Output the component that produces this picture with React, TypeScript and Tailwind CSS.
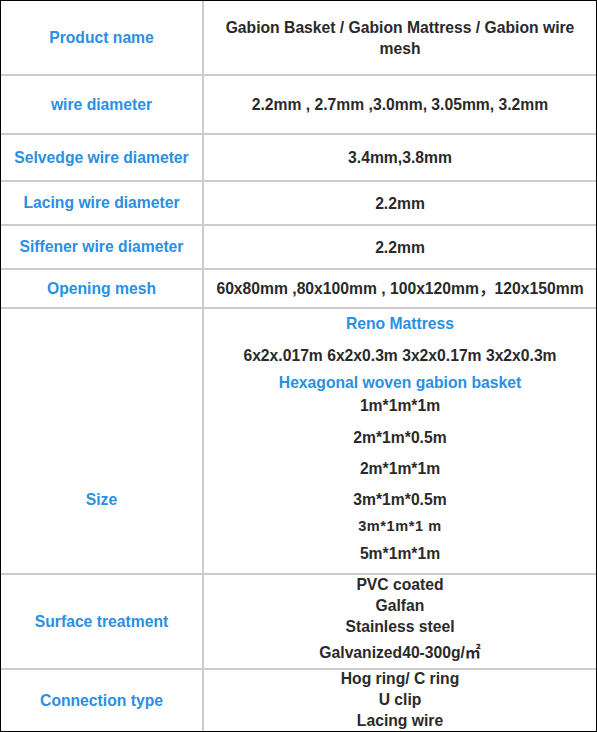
import React from "react";

type Line = { text: string; cls: string; blue?: boolean; small?: boolean };

interface Row {
  label: string;
  cls: string;
  labelCls?: string;
  lines?: Line[];
  value?: string[];
}

const rows: Row[] = [
  { label: "Product name", cls: "h-[75px]", value: ["Gabion Basket / Gabion Mattress / Gabion wire mesh"] },
  { label: "wire diameter", cls: "h-[59px]", value: ["2.2mm , 2.7mm ,3.0mm, 3.05mm, 3.2mm"] },
  { label: "Selvedge wire diameter", cls: "h-[47px]", value: ["3.4mm,3.8mm"] },
  { label: "Lacing wire diameter", cls: "h-[44px]", value: ["2.2mm"] },
  { label: "Siffener wire diameter", cls: "h-[44px]", value: ["2.2mm"] },
  { label: "Opening mesh", cls: "h-[39px]", value: ["60x80mm ,80x100mm , 100x120mm，120x150mm"] },
  {
    label: "Size",
    cls: "h-[266px]",
    labelCls: "pt-[118px]",
    lines: [
      { text: "Reno Mattress", cls: "h-[28px]", blue: true },
      { text: "6x2x.017m 6x2x0.3m 3x2x0.17m 3x2x0.3m", cls: "h-9" },
      { text: "Hexagonal woven gabion basket", cls: "h-[18px]", blue: true },
      { text: "1m*1m*1m", cls: "h-[28px]" },
      { text: "2m*1m*0.5m", cls: "h-9" },
      { text: "2m*1m*1m", cls: "h-[26px]" },
      { text: "3m*1m*0.5m", cls: "h-9" },
      { text: "3m*1m*1 m", cls: "h-[18px]", small: true },
      { text: "5m*1m*1m", cls: "h-9" },
    ],
  },
  {
    label: "Surface treatment",
    cls: "h-[95px]",
    lines: [
      { text: "PVC coated", cls: "h-5" },
      { text: "Galfan", cls: "h-[22px]" },
      { text: "Stainless steel", cls: "h-5" },
      { text: "Galvanized40-300g/㎡", cls: "h-[31px]" },
    ],
  },
  {
    label: "Connection type",
    cls: "h-[61px]",
    lines: [
      { text: "Hog ring/ C ring", cls: "h-[18px]" },
      { text: "U clip", cls: "h-[23px]" },
      { text: "Lacing wire", cls: "h-5" },
    ],
  },
];

export default function App() {
  return (
    <div className="w-[597px] h-[732px] bg-white border border-black flex flex-col text-[15.7px] font-bold font-['Liberation_Sans',Arial,'Noto_Sans_CJK_SC',sans-serif]">
      {rows.map((row, i) => (
        <div
          key={row.label}
          className={`flex shrink-0 ${row.cls} ${i < rows.length - 1 ? "border-b-2 border-[#cccccc]" : ""}`}
        >
          <div
            className={`w-[203px] shrink-0 border-r-2 border-[#cccccc] flex items-center justify-center text-center text-[#2b8fe2] ${
              row.labelCls ?? ""
            }`}
          >
            {row.label}
          </div>
          <div className="flex-1 flex flex-col justify-center items-center text-center text-[#2a2a2a] px-3">
            {row.value?.map((v) => (
              <div key={v} className="leading-[21px]">
                {v}
              </div>
            ))}
            {row.lines && (
              <div className="flex flex-col w-full">
                {row.lines.map((l) => (
                  <div
                    key={l.text}
                    className={`flex items-center justify-center whitespace-nowrap ${l.cls} ${
                      l.blue ? "text-[#2b8fe2]" : ""
                    } ${l.small ? "text-[14.5px] tracking-[0.6px]" : ""}`}
                  >
                    {l.text}
                  </div>
                ))}
              </div>
            )}
          </div>
        </div>
      ))}
    </div>
  );
}
